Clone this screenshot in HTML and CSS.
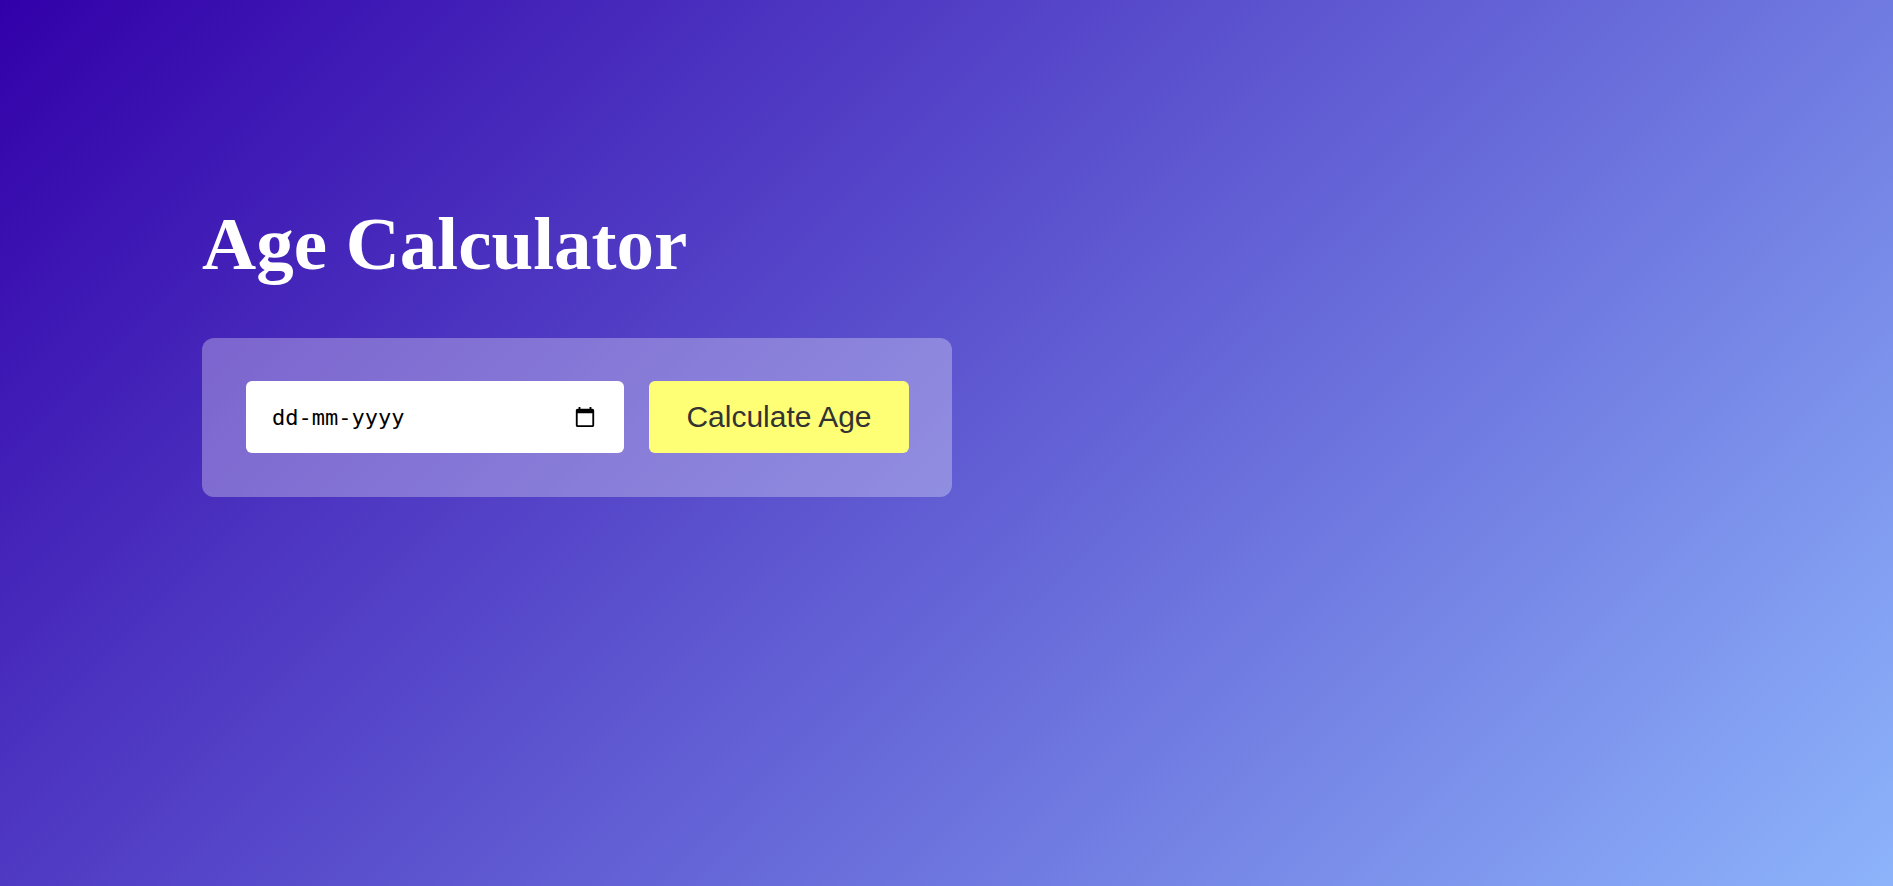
FILE: index.html
```html
<!DOCTYPE html>
<html lang="en">
<head>
<meta charset="utf-8">
<title>Age Calculator</title>
<link rel="stylesheet" href="styles.css">
</head>
<body>
<main class="container">
  <div class="calculator">
    <h1 class="title">Age Calculator</h1>
    <form class="input-box">
      <div class="date-field">
        <input class="date-input" type="text" placeholder="dd-mm-yyyy" aria-label="Date of birth">
        <button class="picker" type="button" aria-label="Open calendar">
          <svg class="picker-icon" viewBox="0 0 24 24"><path d="M20 3h-1V1h-2v2H7V1H5v2H4c-1.100 0-2 .9-2 2v16c0 1.100.9 2 2 2h16c1.100 0 2-.9 2-2V5c0-1.100-.9-2-2-2zm0 18H4V8h16v13z"/></svg>
        </button>
      </div>
      <button class="submit" type="button">Calculate Age</button>
    </form>
  </div>
</main>
</body>
</html>
```
FILE: styles.css
```css
* {
  margin: 0;
  padding: 0;
  box-sizing: border-box;
}

.container {
  width: 100%;
  min-height: 100vh;
  padding: 10px;
  background: linear-gradient(135deg, #3200a9, #8db4fb);
  color: #fff;
}

.calculator {
  width: 100%;
  max-width: 750px;
  margin-top: 191px;
  margin-left: 192px;
}

.title {
  font: bold 75px "Liberation Serif", "Times New Roman", serif;
}

.input-box {
  display: flex;
  align-items: center;
  gap: 25px;
  margin: 51px 0;
  padding: 43px 43px 44px 44px;
  border-radius: 12px;
  background: rgba(255, 255, 255, 0.3);
}

.date-field {
  position: relative;
  flex: 1;
  min-width: 0;
}

.date-input {
  display: block;
  width: 100%;
  height: 72px;
  padding: 0 26px;
  border: 0;
  border-radius: 6px;
  background: #fff;
  color: #000;
  font: 22px "DejaVu Sans Mono", monospace;
}

.date-input::placeholder {
  color: #000;
  opacity: 1;
}

.picker {
  position: absolute;
  top: 0;
  right: 28px;
  height: 100%;
  border: 0;
  background: none;
}

.picker-icon {
  display: block;
  width: 22px;
  height: 22px;
}

.submit {
  flex: 0 0 260px;
  height: 72px;
  border: 0;
  border-radius: 6px;
  background: #ffff76;
  color: #333;
  font: 30px "Liberation Sans", Arial, sans-serif;
}
```
